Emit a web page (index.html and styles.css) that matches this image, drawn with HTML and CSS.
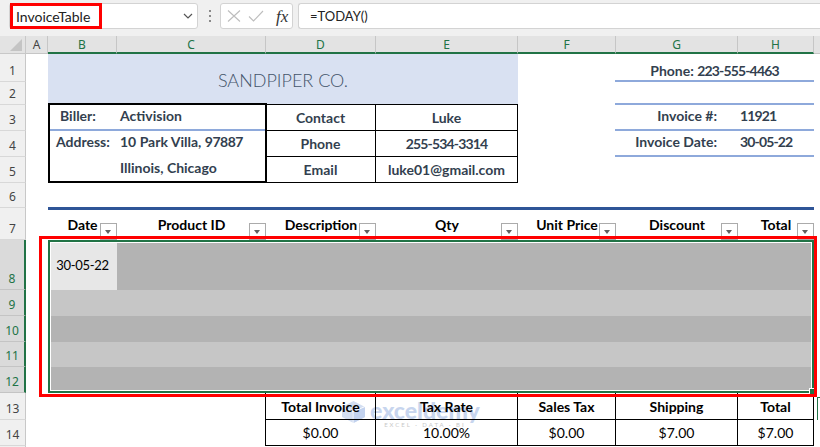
FILE: index.html
```html
<!DOCTYPE html>
<html>
<head>
<meta charset="utf-8">
<link rel="stylesheet" href="styles.css">
</head>
<body>
<div class="fbar">
  <div class="namebox">
    <span class="nb-sel">InvoiceTable</span>
    <svg class="chev" width="10" height="6" viewBox="0 0 10 6"><path d="M1 1 L5 5 L9 1" fill="none" stroke="#555" stroke-width="1.2"/></svg>
  </div>
  <div class="vdots"><i></i><i></i><i></i></div>
  <div class="fbtns">
    <svg class="ic-x" width="14" height="12" viewBox="0 0 14 12"><path d="M1 0.5 L13 11.5 M13 0.5 L1 11.5" fill="none" stroke="#bdbdbd" stroke-width="1.1"/></svg>
    <svg class="ic-ok" width="16" height="12" viewBox="0 0 16 12"><path d="M1 6.5 L5.5 11 L15 1" fill="none" stroke="#bdbdbd" stroke-width="1.1"/></svg>
    <span class="fx">fx</span>
  </div>
  <div class="formula">=TODAY()</div>
</div>

<div class="sheet">
  <div class="corner"></div>
  <div class="ch">A</div>
  <div class="ch sel">B</div>
  <div class="ch sel">C</div>
  <div class="ch sel">D</div>
  <div class="ch sel">E</div>
  <div class="ch sel">F</div>
  <div class="ch sel">G</div>
  <div class="ch sel">H</div>
  <div class="ch fill"></div>

  <div class="rh r1">1</div>
  <div class="rh r2">2</div>
  <div class="rh r3">3</div>
  <div class="rh r4">4</div>
  <div class="rh r5">5</div>
  <div class="rh r6">6</div>
  <div class="rh r7">7</div>
  <div class="rh r8 sel">8</div>
  <div class="rh r9 sel">9</div>
  <div class="rh r10 sel">10</div>
  <div class="rh r11 sel">11</div>
  <div class="rh r12 sel">12</div>
  <div class="rh r13">13</div>
  <div class="rh r14">14</div>
  <div class="rh rfill"></div>

  <div class="title">SANDPIPER CO.</div>

  <div class="contact">
    <div class="cc">Contact</div><div class="cc">Luke</div>
    <div class="cc">Phone</div><div class="cc"><span class="num">255-534-3314</span></div>
    <div class="cc">Email</div><div class="cc">luke01@gmail.com</div>
  </div>

  <div class="biller">
    <div class="brow first"><span class="bl l1">Biller:</span><span class="bv">Activision</span></div>
    <div class="brow"><span class="bl l2">Address:</span><span class="bv">10 Park Villa, <span class="num-s">97887</span></span></div>
    <div class="brow last"><span class="bl"></span><span class="bv">Illinois, Chicago</span></div>
  </div>

  <div class="info i1">Phone:&nbsp;<span class="num">223-555-4463</span></div>
  <div class="info i2"></div>
  <div class="info i3"><span class="il">Invoice #:</span><span class="iv num">11921</span></div>
  <div class="info i4"><span class="il">Invoice Date:</span><span class="iv num">30-05-22</span></div>

  <div class="rule"></div>

  <div class="th cB">Date<span class="fb"></span></div>
  <div class="th cC">Product ID<span class="fb"></span></div>
  <div class="th cD">Description<span class="fb"></span></div>
  <div class="th cE">Qty<span class="fb"></span></div>
  <div class="th cF">Unit Price<span class="fb"></span></div>
  <div class="th cG">Discount<span class="fb"></span></div>
  <div class="th cH">Total<span class="fb"></span></div>

  <div class="band b8"></div>
  <div class="band b9"></div>
  <div class="band b10"></div>
  <div class="band b11"></div>
  <div class="band b12"></div>
  <div class="active">30-05-22</div>

  <div class="selbox"><span class="handle"></span></div>
  <div class="redbox"></div>

  <div class="wm">
    <svg class="wm-logo" width="27" height="24" viewBox="0 0 27 24">
      <path d="M13.5 1 L25 7 L25 17 L13.5 23 L2 17 L2 7 Z" fill="#d3def1"/>
      <path d="M13.5 12 L25 7 M13.5 12 L2 7 M13.5 12 L13.5 23" fill="none" stroke="#fff" stroke-width="1.5"/>
      <path d="M13.5 12 L25 7 L25 17 L13.5 23 Z" fill="#c2d2ee"/>
    </svg>
    <div class="wm-text">
      <span class="wm-word">exceldemy</span>
      <span class="wm-tag">EXCEL · DATA · BI</span>
    </div>
  </div>

  <div class="summary">
    <div class="sh">Total Invoice</div><div class="sh">Tax Rate</div><div class="sh">Sales Tax</div><div class="sh">Shipping</div><div class="sh">Total</div>
    <div class="sv">$0.00</div><div class="sv">10.00%</div><div class="sv">$0.00</div><div class="sv">$7.00</div><div class="sv">$7.00</div>
  </div>

  <div class="i13"></div>
</div>
</body>
</html>
```

FILE: styles.css
```css
body {
  margin: 0;
  width: 820px;
  height: 447px;
  overflow: hidden;
  background: #fff;
  font-family: Lato, "Liberation Sans", sans-serif;
}

/* ---------- formula bar ---------- */
.fbar {
  height: 36px;
  box-sizing: border-box;
  background: #f0f0f0;
  display: flex;
  align-items: flex-start;
  padding: 3px 0 0 9px;
}
.namebox {
  width: 189px;
  height: 26px;
  box-sizing: border-box;
  background: #fff;
  border: 1px solid #d3d3d3;
  border-radius: 3px;
  display: flex;
  align-items: center;
}
.nb-sel {
  align-self: stretch;
  margin: -1px 0;
  width: 92px;
  box-sizing: border-box;
  border: 3px solid #ff0000;
  padding-left: 3px;
  display: flex;
  align-items: center;
  font-size: 14px;
  color: #222;
}
.chev { margin-left: auto; margin-right: 4px; }
.vdots {
  margin-left: 11px;
  height: 26px;
  display: flex;
  flex-direction: column;
  justify-content: center;
  gap: 3px;
}
.vdots i {
  display: block;
  width: 2px;
  height: 2px;
  background: #8a8a8a;
}
.fbtns {
  margin-left: 9px;
  width: 73px;
  height: 26px;
  box-sizing: border-box;
  background: #fff;
  border: 1px solid #d3d3d3;
  border-radius: 3px;
  display: flex;
  align-items: center;
  padding-left: 6px;
}
.ic-ok { margin-left: 7px; }
.fx {
  margin-left: 12px;
  font-family: "Liberation Serif", serif;
  font-style: italic;
  font-size: 17px;
  color: #333;
  line-height: 17px;
}
.formula {
  margin-left: 5px;
  flex: 1;
  height: 26px;
  box-sizing: border-box;
  background: #fff;
  border: 1px solid #d3d3d3;
  border-right: none;
  border-radius: 3px 0 0 3px;
  padding-left: 11px;
  display: flex;
  align-items: center;
  font-size: 13px;
  color: #222;
}

/* ---------- sheet grid ---------- */
.sheet {
  display: grid;
  grid-template-columns: 26px 22px 69px 149px 110px 142px 98px 122px 76px 1fr;
  grid-template-rows: 18px 28px 23px 26px 26px 26px 25px 32px 50px 26px 26px 25px 26px 27px 26px 1fr;
  height: 411px;
}

.corner {
  grid-row: 1;
  grid-column: 1;
  background: #e3e3e3;
  border-right: 1px solid #c8c8c8;
  border-bottom: 1px solid #c8c8c8;
  position: relative;
}
.corner::after {
  content: "";
  position: absolute;
  right: 3px;
  bottom: 2px;
  border-left: 12px solid transparent;
  border-bottom: 12px solid #c4c4c4;
}
.ch {
  grid-row: 1;
  background: #e3e3e3;
  border-right: 1px solid #c6c6c6;
  border-bottom: 1px solid #c6c6c6;
  box-sizing: border-box;
  display: flex;
  align-items: center;
  justify-content: center;
  font-family: "Noto Sans", sans-serif;
  font-size: 12px;
  color: #444;
}
.ch.sel {
  color: #217346;
  border-bottom: 2px solid #217346;
}
.ch.fill { border-right: none; }

.rh {
  grid-column: 1;
  background: #f0f0f0;
  border-right: 1px solid #c8c8c8;
  border-bottom: 1px solid #d8d8d8;
  box-sizing: border-box;
  display: flex;
  justify-content: center;
  align-items: flex-end;
  padding-bottom: 2px;
  font-family: "Noto Sans", sans-serif;
  font-size: 12px;
  line-height: 16px;
  color: #444;
}
.rh.sel {
  background: #dadada;
  color: #217346;
  border-right: 2px solid #217346;
  border-bottom-color: #c4c4c4;
}
.r1 { grid-row: 2; }
.r2 { grid-row: 3; }
.r3 { grid-row: 4; }
.r4 { grid-row: 5; }
.r5 { grid-row: 6; }
.r6 { grid-row: 7; }
.r7 { grid-row: 8; }
.r8 { grid-row: 9; }
.r9 { grid-row: 10; }
.r10 { grid-row: 11; }
.r11 { grid-row: 12; }
.r12 { grid-row: 13; }
.r13 { grid-row: 14; }
.r14 { grid-row: 15; }
.rfill { grid-row: 16; border-bottom: none; }

/* ---------- invoice header ---------- */
.title {
  grid-row: 2 / 4;
  grid-column: 3 / 7;
  background: #d9e1f2;
  display: flex;
  align-items: center;
  justify-content: center;
  font-size: 18px;
  font-weight: 300;
  color: #44546a;
}

.num { letter-spacing: -0.85px; }
.num-s { letter-spacing: -0.5px; }

.biller {
  grid-row: 4 / 7;
  grid-column: 3 / 5;
  margin: -2px -1px 0 0;
  border: 2px solid #000;
  display: flex;
  flex-direction: column;
  font-size: 14px;
  font-weight: 700;
  line-height: 17px;
  color: #333f4f;
}
.brow {
  display: flex;
  height: 26px;
  box-sizing: border-box;
  padding-top: 2px;
}
.brow.first { border-bottom: 2px solid #8ea9db; }
.brow.last { height: 24px; }
.bl { width: 67px; box-sizing: border-box; flex: none; }
.bl.l1 { padding-left: 10px; }
.bl.l2 { padding-left: 6px; }
.bv { padding-left: 3px; }

.contact {
  grid-row: 4 / 7;
  grid-column: 5 / 7;
  margin-top: -1px;
  border-top: 1px solid #000;
  display: grid;
  grid-template-columns: 110px 142px;
  grid-template-rows: repeat(3, 26px);
  font-size: 14px;
  font-weight: 700;
  color: #333f4f;
}
.cc {
  border-right: 1px solid #000;
  border-bottom: 1px solid #000;
  display: flex;
  align-items: center;
  justify-content: center;
}

.info {
  grid-column: 8 / 10;
  margin-left: -1px;
  border-bottom: 2px solid #8ea9db;
  display: flex;
  font-size: 14px;
  font-weight: 700;
  line-height: 17px;
  color: #333f4f;
}
.i1 { grid-row: 2; justify-content: center; align-items: flex-end; padding-bottom: 1px; }
.i2 { grid-row: 3; }
.i3 { grid-row: 4; padding-top: 2px; }
.i4 { grid-row: 5; padding-top: 2px; }
.il { width: 123px; box-sizing: border-box; padding-right: 21px; text-align: right; }
.iv { padding-left: 2px; }

.rule {
  grid-row: 7;
  grid-column: 3 / 10;
  align-self: end;
  height: 3px;
  margin-bottom: -2px;
  background: #2f5597;
}

/* ---------- table headers ---------- */
.th {
  grid-row: 8;
  position: relative;
  display: flex;
  align-items: center;
  justify-content: center;
  font-size: 14px;
  font-weight: 700;
  color: #000;
}
.cB { grid-column: 3; }
.cC { grid-column: 4; }
.cD { grid-column: 5; }
.cE { grid-column: 6; }
.cF { grid-column: 7; }
.cG { grid-column: 8; }
.cH { grid-column: 9; }
.fb {
  position: absolute;
  right: 0;
  bottom: 0;
  width: 17px;
  height: 17px;
  box-sizing: border-box;
  border: 1px solid #ababab;
  background: #fff;
  z-index: 1;
}
.fb::after {
  content: "";
  position: absolute;
  left: 4px;
  top: 6px;
  border-left: 3.5px solid transparent;
  border-right: 3.5px solid transparent;
  border-top: 4px solid #606060;
}

/* ---------- table body ---------- */
.band { grid-column: 3 / 10; }
.b8 { grid-row: 9; background: #b3b3b3; }
.b9 { grid-row: 10; background: #c6c6c6; }
.b10 { grid-row: 11; background: #b3b3b3; }
.b11 { grid-row: 12; background: #c6c6c6; }
.b12 { grid-row: 13; background: #b3b3b3; }
.active {
  grid-row: 9;
  grid-column: 3;
  background: #e7e7e7;
  display: flex;
  align-items: center;
  justify-content: center;
  font-size: 13px;
  letter-spacing: -0.3px;
  color: #000;
}
.selbox {
  grid-row: 9 / 14;
  grid-column: 3 / 10;
  border: 2px solid #217346;
  box-shadow: inset 0 0 0 1px #fff;
  position: relative;
  z-index: 2;
}
.handle {
  position: absolute;
  right: -4px;
  bottom: -4px;
  width: 5px;
  height: 5px;
  background: #217346;
  border: 1px solid #fff;
}
.redbox {
  grid-row: 9 / 14;
  grid-column: 3 / 10;
  margin: -4px -3px -4px -9px;
  border: 3px solid #ff0000;
  z-index: 3;
}

/* ---------- watermark ---------- */
.wm {
  grid-row: 14 / 16;
  grid-column: 5 / 8;
  justify-self: start;
  align-self: start;
  margin: 7px 0 0 74px;
  display: flex;
  align-items: flex-start;
  gap: 3px;
}
.wm-text { display: flex; flex-direction: column; align-items: center; }
.wm-word {
  font-size: 23px;
  font-weight: 900;
  line-height: 21px;
  color: #c7d5ee;
}
.wm-tag {
  font-size: 6px;
  letter-spacing: 2px;
  line-height: 8px;
  color: #c8c8c8;
}

/* ---------- summary ---------- */
.summary {
  grid-row: 14 / 16;
  grid-column: 5 / 10;
  margin-left: -1px;
  border-left: 1px solid #000;
  display: grid;
  grid-template-columns: 110px 142px 98px 122px 76px;
  grid-template-rows: 27px 26px;
  font-size: 14px;
  color: #000;
}
.sh, .sv {
  border-right: 1px solid #000;
  border-bottom: 1px solid #000;
  display: flex;
  align-items: center;
  justify-content: center;
}
.sh { font-weight: 700; }

.i13 {
  grid-row: 14;
  grid-column: 10;
  margin: 4px 0 0 3px;
  border-left: 1px solid #217346;
  border-top: 1px solid #217346;
}
```
